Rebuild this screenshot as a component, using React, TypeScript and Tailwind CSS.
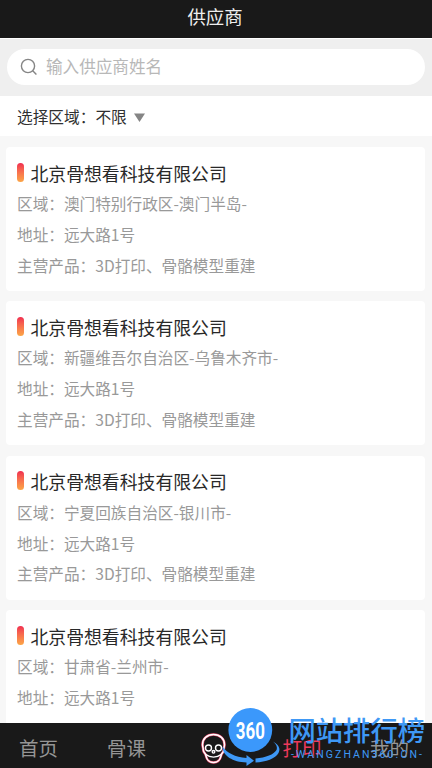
type Supplier = {
  name: string;
  area: string;
  address: string;
  products?: string;
};

const NAME = "北京骨想看科技有限公司";
const ADDRESS = "远大路1号";
const PRODUCTS = "3D打印、骨骼模型重建";

const SUPPLIERS: Supplier[] = [
  {
    name: NAME,
    area: "澳门特别行政区-澳门半岛-",
    address: ADDRESS,
    products: PRODUCTS,
  },
  {
    name: NAME,
    area: "新疆维吾尔自治区-乌鲁木齐市-",
    address: ADDRESS,
    products: PRODUCTS,
  },
  {
    name: NAME,
    area: "宁夏回族自治区-银川市-",
    address: ADDRESS,
    products: PRODUCTS,
  },
  { name: NAME, area: "甘肃省-兰州市-", address: ADDRESS },
];

function SearchBar() {
  return (
    <div className="h-[58px] shrink-0 border-t border-white bg-[#efefef] px-[7px] pt-[10px]">
      <div className="flex h-9 items-center rounded-full bg-white pl-[13px]">
        <svg
          className="h-[18px] w-[18px] shrink-0"
          viewBox="0 0 18 18"
          fill="none"
          stroke="#858585"
          strokeWidth="1.4"
        >
          <circle cx="8" cy="8" r="6.6" />
          <path d="M12.7 12.7 16.4 16.6" />
        </svg>
        <span className="ml-2 pb-0.5 text-[16.6px] leading-none text-[#b8b8b8]">
          输入供应商姓名
        </span>
      </div>
    </div>
  );
}

function AreaFilter() {
  return (
    <div className="flex h-10 shrink-0 items-center bg-white pt-0.5 pl-[17px] text-[15.7px] leading-none text-[#303030]">
      <span>选择区域：</span>
      <span>不限</span>
      <svg className="ml-[7px] h-[9px] w-[11px]" viewBox="0 0 11 9">
        <path d="M0 0.5H11L5.5 9Z" fill="#858585" />
      </svg>
    </div>
  );
}

function SupplierCard({ supplier }: { supplier: Supplier }) {
  return (
    <div className="h-[144px] shrink-0 rounded-[4px] bg-white pt-[15px] pl-[11px]">
      <div className="flex h-[22px] items-center">
        <span className="mb-0.5 h-[19px] w-[7px] rounded-full bg-linear-to-b from-[#f02a50] to-[#fba545]" />
        <span className="ml-[6.5px] pt-px text-[17.85px] leading-none text-[#282828]">
          {supplier.name}
        </span>
      </div>
      <div className="mt-[5px] text-[15.65px] leading-[30.8px] text-[#999]">
        <p>区域：{supplier.area}</p>
        <p>地址：{supplier.address}</p>
        {supplier.products ? <p>主营产品：{supplier.products}</p> : null}
      </div>
    </div>
  );
}

const SKULL_OUTLINE =
  "M12.5 1.5C6 1.5 1.5 5.8 1.5 11.5C1.5 13.8 2.3 15 2.3 17C2.3 19.5 4 20 4.6 21.500C5.400 24 5.500 29.500 12.500 29.500S19.600 24 20.400 21.500C21 20 22.700 19.500 22.700 17C22.700 15 23.500 13.800 23.500 11.500C23.500 5.800 19 1.500 12.500 1.500Z";

function SkullIcon() {
  return (
    <svg className="h-[31px] w-[25px]" viewBox="0 0 25 31" fill="none">
      <path d={SKULL_OUTLINE} stroke="#e9486c" strokeWidth="2.6" />
      <path d={SKULL_OUTLINE} stroke="#fff" strokeWidth="1.5" />
      <g stroke="#fff" strokeWidth="1.4">
        <circle cx="7.500" cy="15" r="3" />
        <circle cx="17.500" cy="15" r="3" />
        <circle cx="12.500" cy="18.800" r="1.300" />
        <path d="M5 21.500C9 25 16 25 20 21.500" />
      </g>
    </svg>
  );
}

function TabBar() {
  return (
    <nav className="grid h-[45px] shrink-0 grid-cols-[88px_88px_167px_1fr] items-center bg-[#191919] pt-[5px] text-[19.5px] leading-none text-[#959595]">
      <span className="pl-[19px]">首页</span>
      <span className="pl-[19px]">骨课</span>
      <span className="flex items-center gap-[56.5px] pl-[25px]">
        <SkullIcon />
        <span className="whitespace-nowrap text-[#ed3a5c]">打印</span>
      </span>
      <span className="pl-[27px]">我的</span>
    </nav>
  );
}

// Site badge that floats over the bottom of the page
function SiteMark() {
  return (
    <div className="pointer-events-none absolute top-[704px] left-[218px] h-[64px] w-[214px] text-[#3e98f5]">
      <svg className="absolute top-0 left-0 h-16 w-16" viewBox="0 0 64 64">
        <circle cx="32.3" cy="26" r="21.9" fill="#3b98fb" />
        <g fill="#3e98f5">
          <path d="M4.5 42.5C9 49 17 53 28.5 54V51L36 56.7L28.5 62V58.5C15 58 4.5 52 4.5 42.5Z" />
          <path d="M37.5 54.5C48 53.5 56 50.5 58.5 46C59.8 43 58 40 55 37.5C60.5 40.5 63 44.5 60.5 49C57.5 54.5 48 58 37.5 58.5Z" />
        </g>
        <text
          x="32.3"
          y="35"
          textAnchor="middle"
          textLength="29"
          lengthAdjust="spacingAndGlyphs"
          className="fill-white font-['Roboto'] text-[24px] font-bold"
        >
          360
        </text>
      </svg>
      <div className="absolute top-[11.5px] left-[70.5px] text-[27.3px] leading-none font-medium whitespace-nowrap">
        网站排行榜
      </div>
      <div className="absolute top-[46px] left-[73px] font-['Roboto'] text-[10.5px] leading-none tracking-[2.1px] whitespace-nowrap">
        -WANGZHAN360.CN-
      </div>
    </div>
  );
}

export default function App() {
  return (
    <div className="relative flex h-[768px] w-[432px] flex-col overflow-hidden bg-[#f7f7f7] font-['Noto_Sans_CJK_SC',sans-serif]">
      <header className="flex h-[38px] shrink-0 items-center justify-center bg-[#191919] pr-[2px] pb-[5px] text-[18.4px] leading-none text-[#eee]">
        供应商
      </header>
      <SearchBar />
      <AreaFilter />
      <main className="flex min-h-0 flex-1 flex-col gap-[10.4px] overflow-hidden pt-[11px] pr-[7px] pl-[6px]">
        {SUPPLIERS.map((supplier) => (
          <SupplierCard key={supplier.area} supplier={supplier} />
        ))}
      </main>
      <TabBar />
      <SiteMark />
    </div>
  );
}
